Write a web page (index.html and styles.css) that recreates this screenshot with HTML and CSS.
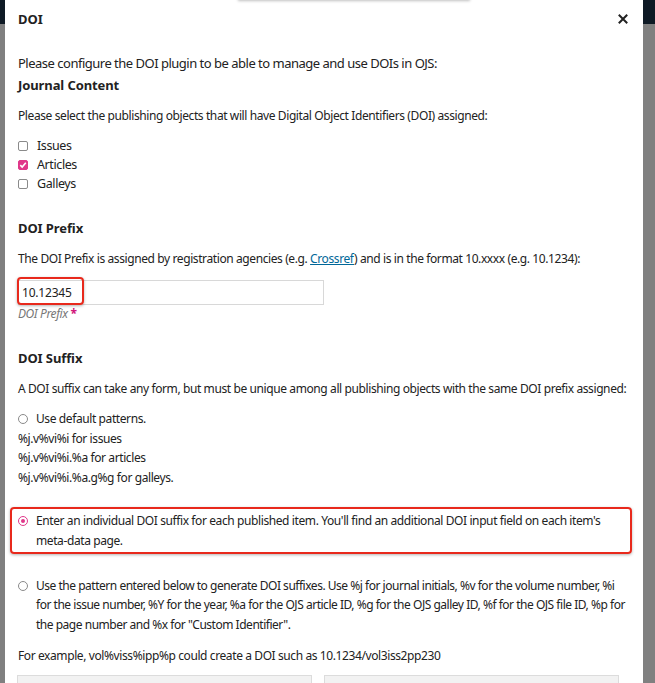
FILE: index.html
```html
<!DOCTYPE html>
<html>
<head>
<meta charset="utf-8">
<link rel="stylesheet" href="styles.css">
</head>
<body>
<div class="backdrop">
  <div class="topbar"></div>
</div>
<div class="ghost"></div>
<div class="modal">
  <div class="modal-header">
    <span class="modal-title">DOI</span>
    <span class="close">
      <svg width="10" height="10" viewBox="0 0 10 10"><path d="M1.5 1.5 L8.5 8.5 M8.5 1.5 L1.5 8.5" stroke="#222" stroke-width="2" stroke-linecap="square"/></svg>
    </span>
  </div>
  <div class="modal-body">
    <p class="intro">Please configure the DOI plugin to be able to manage and use DOIs in OJS:</p>
    <h3 class="heading tight">Journal Content</h3>
    <p class="desc">Please select the publishing objects that will have Digital Object Identifiers (DOI) assigned:</p>
    <ul class="checks">
      <li><span class="cb"></span>Issues</li>
      <li><span class="cb checked"><svg width="8" height="8" viewBox="0 0 8 8"><path d="M1.3 4.2 L3.2 6 L6.8 1.8" stroke="#fff" stroke-width="1.6" fill="none"/></svg></span>Articles</li>
      <li><span class="cb"></span>Galleys</li>
    </ul>

    <h3 class="heading section">DOI Prefix</h3>
    <p class="desc">The DOI Prefix is assigned by registration agencies (e.g. <a class="link" href="#">Crossref</a>) and is in the format 10.xxxx (e.g. 10.1234):</p>
    <div class="field">
      <div class="input prefix"><span>10.12345</span><span class="mark-prefix"></span></div>
      <div class="label">DOI Prefix <span class="req">*</span></div>
    </div>

    <h3 class="heading section">DOI Suffix</h3>
    <p class="desc">A DOI suffix can take any form, but must be unique among all publishing objects with the same DOI prefix assigned:</p>
    <div class="option">
      <div class="opt-line"><span class="radio"></span>Use default patterns.</div>
      <div>%j.v%vi%i for issues</div>
      <div>%j.v%vi%i.%a for articles</div>
      <div>%j.v%vi%i.%a.g%g for galleys.</div>
    </div>
    <div class="option selected">
      <div class="opt-line"><span class="radio on"></span>Enter an individual DOI suffix for each published item. You'll find an additional DOI input field on each item's meta-data page.</div>
      <span class="mark-option"></span>
    </div>
    <div class="option pattern">
      <div class="opt-line"><span class="radio"></span>Use the pattern entered below to generate DOI suffixes. Use %j for journal initials, %v for the volume number, %i for the issue number, %Y for the year, %a for the OJS article ID, %g for the OJS galley ID, %f for the OJS file ID, %p for the page number and %x for "Custom Identifier".</div>
    </div>
    <p class="example">For example, vol%viss%ipp%p could create a DOI such as 10.1234/vol3iss2pp230</p>
    <div class="pair">
      <div class="input disabled"></div>
      <div class="input disabled"></div>
    </div>
  </div>
</div>
</body>
</html>
```
FILE: styles.css
```css
html, body {
  margin: 0;
  padding: 0;
}
body {
  width: 655px;
  height: 683px;
  overflow: hidden;
  background: #808080;
  font-family: "Noto Sans", "Liberation Sans", sans-serif;
  font-size: 12px;
  color: #222;
  position: relative;
}
.backdrop {
  height: 683px;
}
.topbar {
  height: 24px;
  background: #0e1a25;
}
.ghost {
  position: absolute;
  left: 238px;
  top: -6px;
  width: 232px;
  height: 6px;
  box-shadow: 0 1px 3px rgba(0,0,0,0.25);
  z-index: 2;
}
.modal {
  position: absolute;
  left: 5px;
  top: 0;
  width: 638px;
  height: 700px;
  background: #fff;
  box-sizing: border-box;
  padding: 0 13px;
}
.modal-header {
  height: 37px;
  display: flex;
  align-items: center;
  justify-content: space-between;
}
.modal-title {
  font-weight: 700;
  font-size: 13px;
}
.close {
  display: flex;
  margin-right: 2px;
}
.modal-body {
  line-height: 20px;
  letter-spacing: -0.4px;
}
p { margin: 0; }
.intro {
  margin-top: 16px;
  font-size: 13px;
  letter-spacing: -0.5px;
}
.heading {
  margin: 0;
  font-size: 13px;
  font-weight: 700;
  line-height: 20px;
  letter-spacing: -0.1px;
}
.heading.tight { margin-top: 2px; }
.heading.section { margin-top: 25px; }
.desc { margin-top: 11px; }
.checks {
  list-style: none;
  margin: 10px 0 0;
  padding: 0;
  line-height: 19px;
  font-size: 12.5px;
}
.checks li {
  display: flex;
  align-items: center;
}
.cb {
  width: 8px;
  height: 8px;
  border: 1px solid #8a8a8a;
  border-radius: 2px;
  margin-right: 9px;
  display: flex;
  align-items: center;
  justify-content: center;
  background: #fff;
}
.cb.checked {
  background: #e0388a;
  border-color: #e0388a;
}
.link {
  color: #006798;
  text-decoration: underline;
}
.field { margin-top: 11px; }
.input {
  box-sizing: border-box;
  height: 25px;
  border: 1px solid #d8d8d8;
  background: #fff;
  display: flex;
  align-items: center;
  padding: 0 3px;
  position: relative;
  letter-spacing: -0.2px;
}
.input.prefix { width: 306px; }
.mark-prefix {
  position: absolute;
  left: -2px;
  top: -4px;
  width: 67px;
  height: 28px;
  border: 2px solid #e8291c;
  border-radius: 4px;
  box-sizing: border-box;
  box-shadow: 0 1px 3px rgba(0,0,0,0.3);
}
.label {
  line-height: 18px;
  font-style: italic;
  color: #777;
}
.req {
  color: #d0147a;
  font-weight: 700;
  font-style: normal;
}
.option {
  line-height: 19.5px;
  margin-top: 10px;
  position: relative;
}
.opt-line {
  position: relative;
  padding-left: 18px;
}
.radio {
  position: absolute;
  left: 0;
  top: 5px;
  width: 8px;
  height: 8px;
  border: 1px solid #8a8a8a;
  border-radius: 50%;
  background: #fff;
}
.radio.on {
  border-color: #e0388a;
}
.radio.on::after {
  content: "";
  position: absolute;
  left: 2px;
  top: 2px;
  width: 4px;
  height: 4px;
  border-radius: 50%;
  background: #e0388a;
}
.option.selected {
  line-height: 20px;
  margin-top: 23.5px;
}
.option.selected .radio { top: 5px; }
.mark-option {
  position: absolute;
  left: -8px;
  right: -2px;
  top: -4px;
  bottom: -3px;
  border: 2px solid #e8291c;
  border-radius: 4px;
  box-shadow: 0 1px 3px rgba(0,0,0,0.3);
}
.option.pattern {
  margin-top: 25px;
  letter-spacing: -0.48px;
}
.example { margin-top: 12px; }
.pair {
  margin-top: 9px;
  display: flex;
  gap: 12px;
  margin-left: -1px;
}
.input.disabled {
  width: 295px;
  height: 30px;
  background: #f2f2f2;
  border-color: #dcdcdc;
}
```
